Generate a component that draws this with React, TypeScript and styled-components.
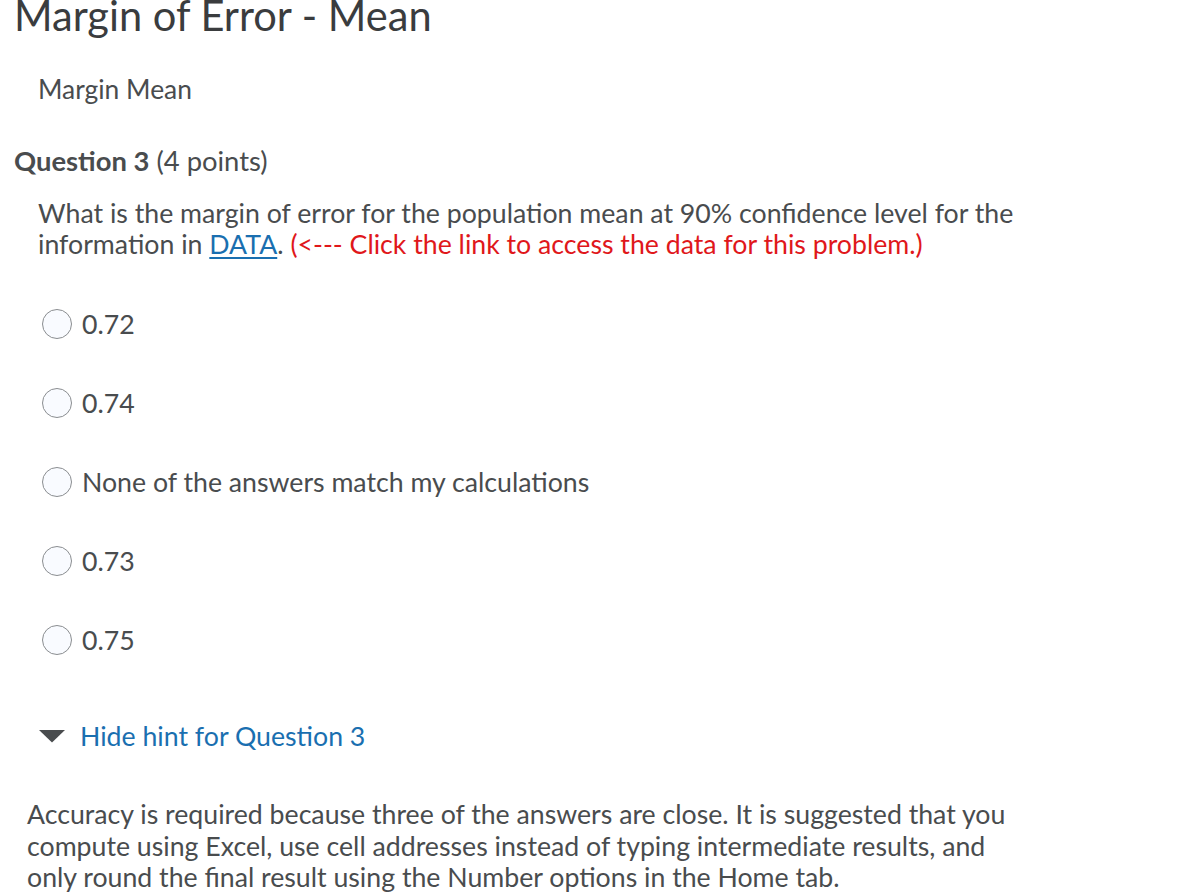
import styled, { createGlobalStyle } from "styled-components";

const GlobalStyle = createGlobalStyle`
  html, body {
    margin: 0;
    padding: 0;
    background: #ffffff;
  }
  body {
    font-family: Lato, "Noto Sans", sans-serif;
    color: #494c4e;
    overflow: hidden;
  }
`;

const Page = styled.div`
  padding: 0 14px;
  width: 1202px;
  height: 895px;
  box-sizing: border-box;
  overflow: hidden;
`;

const Title = styled.h1`
  margin: -9px 0 0;
  font-size: 41.6px;
  font-weight: 400;
  line-height: 48px;
  color: #3a3c3e;
`;

const SubTitle = styled.div`
  margin: 35px 0 0 24px;
  font-size: 26.4px;
  line-height: 30px;
`;

const QuestionHead = styled.h2`
  margin: 42px 0 0;
  font-size: 27.4px;
  line-height: 30px;
  font-weight: 400;
  color: #494c4e;
`;

const Strong = styled.span`
  font-weight: 700;
`;

const Prompt = styled.p`
  margin: 22px 0 0 24px;
  font-size: 26.7px;
  line-height: 31px;
  max-width: 1000px;
`;

const DataLink = styled.a`
  color: #1a6fb0;
  text-decoration: underline;
  text-underline-offset: 3px;
`;

const Red = styled.span`
  color: #e0171b;
`;

const Options = styled.div`
  margin-top: 48px;
  display: flex;
  flex-direction: column;
  gap: 47px;
  padding-left: 28px;
`;

const Option = styled.label`
  display: flex;
  align-items: center;
  gap: 10px;
  height: 32px;
  font-size: 26.7px;
  cursor: pointer;
`;

const Radio = styled.span`
  width: 30px;
  height: 30px;
  border-radius: 50%;
  border: 1.5px solid #8a8d90;
  background: #f9fbff;
  box-sizing: border-box;
  flex-shrink: 0;
`;

const HintToggle = styled.div`
  margin-top: 65px;
  padding-left: 24px;
  display: flex;
  align-items: center;
  gap: 14px;
  font-size: 26.7px;
  line-height: 30px;
  color: #1a6fb0;
  cursor: pointer;
`;

const HintBody = styled.p`
  margin: 48px 0 0 13px;
  font-size: 26.7px;
  line-height: 31.5px;
  max-width: 1000px;
`;

const options = [
  "0.72",
  "0.74",
  "None of the answers match my calculations",
  "0.73",
  "0.75",
];

export default function App() {
  return (
    <>
      <GlobalStyle />
      <Page>
        <Title>Margin of Error - Mean</Title>
        <SubTitle>Margin Mean</SubTitle>
        <QuestionHead>
          <Strong>Question 3</Strong> (4 points)
        </QuestionHead>
        <Prompt>
          What is the margin of error for the population mean at 90% confidence
          level for the information in <DataLink href="#">DATA</DataLink>.{" "}
          <Red>(&lt;--- Click the link to access the data for this problem.)</Red>
        </Prompt>
        <Options>
          {options.map((o) => (
            <Option key={o}>
              <Radio />
              {o}
            </Option>
          ))}
        </Options>
        <HintToggle>
          <svg width="28" height="14" viewBox="0 0 28 14">
            <path d="M1 1 L27 1 L14 13.5 Z" fill="#494c4e" />
          </svg>
          Hide hint for Question 3
        </HintToggle>
        <HintBody>
          Accuracy is required because three of the answers are close. It is
          suggested that you compute using Excel, use cell addresses instead of
          typing intermediate results, and only round the final result using the
          Number options in the Home tab.
        </HintBody>
      </Page>
    </>
  );
}
